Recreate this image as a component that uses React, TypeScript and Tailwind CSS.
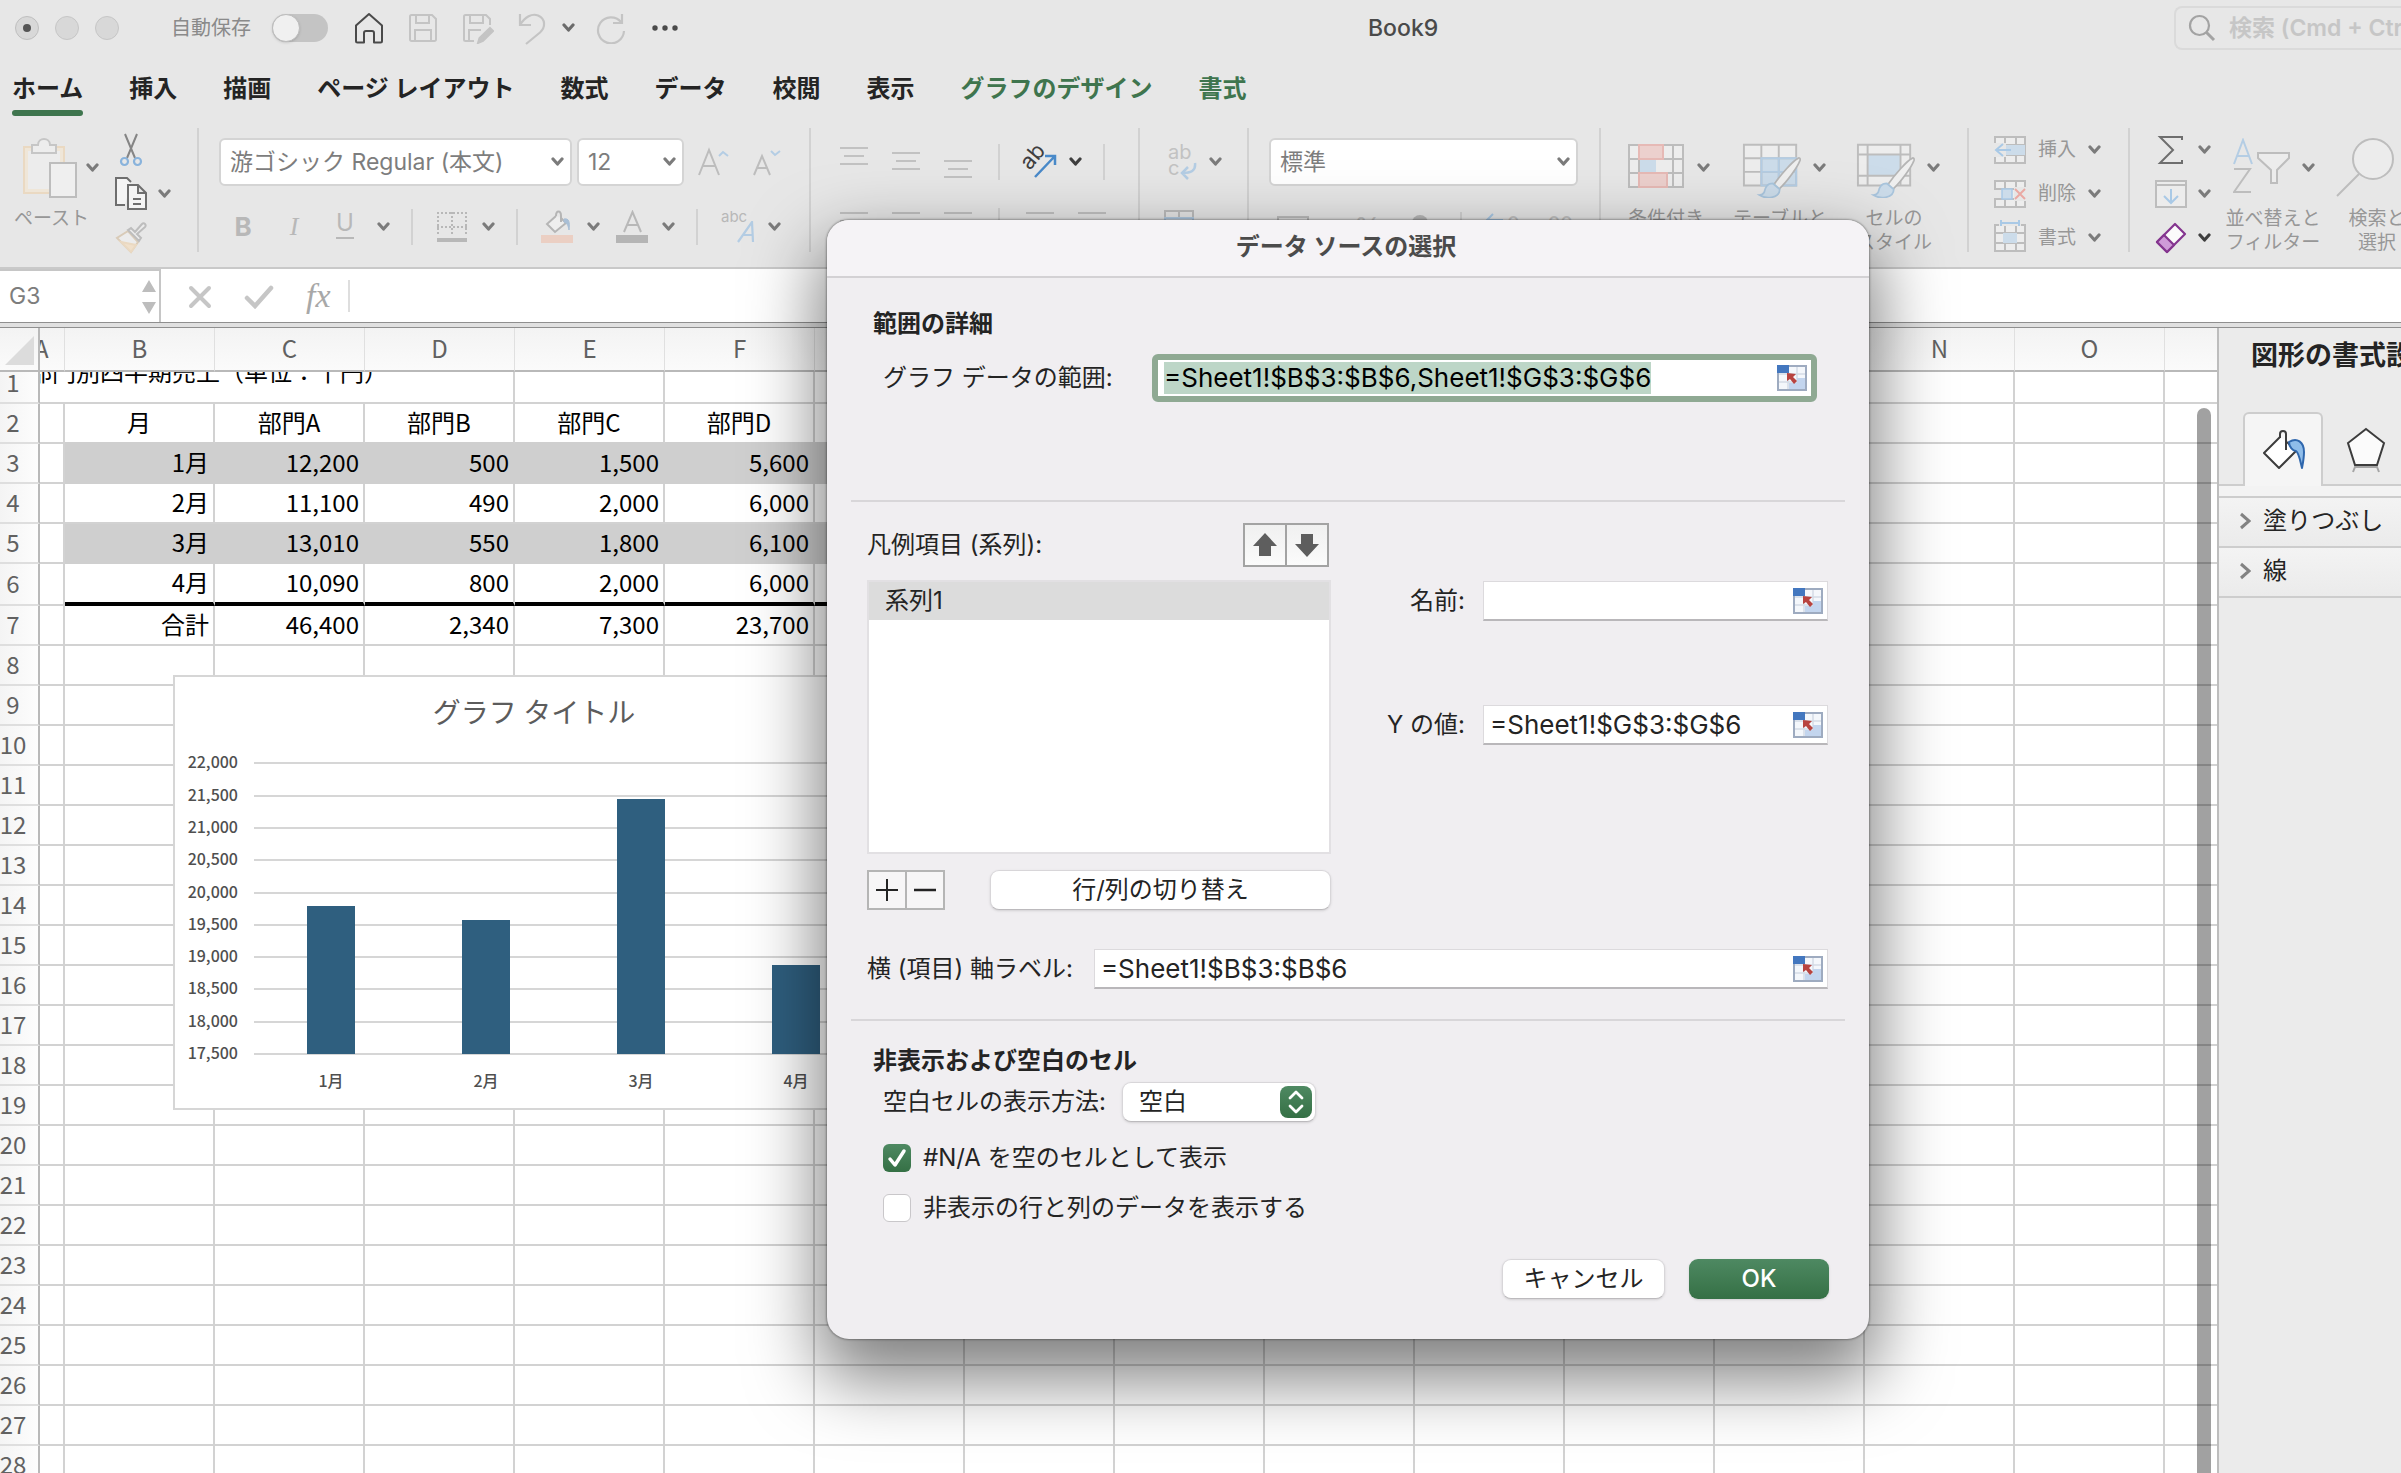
import { useEffect, useRef } from "react";
import type { ReactNode } from "react";
import clsx from "clsx";

const SANS = "font-['Inter','Noto_Sans_CJK_JP',sans-serif]";
const SHEET = "font-['Noto_Sans_CJK_JP',sans-serif]";

const tabs = [
  { label: "ホーム", active: true },
  { label: "挿入" },
  { label: "描画" },
  { label: "ページ レイアウト" },
  { label: "数式" },
  { label: "データ" },
  { label: "校閲" },
  { label: "表示" },
  { label: "グラフのデザイン", contextual: true },
  { label: "書式", contextual: true },
];

const columns = ["B", "C", "D", "E", "F", "G", "H", "I", "J", "K", "L", "M", "N", "O", "P"];

const sheetRows: Record<number, string[]> = {
  2: ["月", "部門A", "部門B", "部門C", "部門D", ""],
  3: ["1月", "12,200", "500", "1,500", "5,600", ""],
  4: ["2月", "11,100", "490", "2,000", "6,000", ""],
  5: ["3月", "13,010", "550", "1,800", "6,100", ""],
  6: ["4月", "10,090", "800", "2,000", "6,000", ""],
  7: ["合計", "46,400", "2,340", "7,300", "23,700", ""],
};

const chartData = [
  { label: "1月", value: 19800 },
  { label: "2月", value: 19590 },
  { label: "3月", value: 21460 },
  { label: "4月", value: 18890 },
];

function Chevron({ className = "text-[#7b7b7b]" }: { className?: string }) {
  return (
    <svg width="13" height="10" viewBox="0 0 13 10" className={clsx("shrink-0", className)}>
      <path d="M2 2l4.500 5L11 2" fill="none" stroke="currentColor" strokeWidth="3.200" strokeLinecap="round" strokeLinejoin="round" />
    </svg>
  );
}

function IconButton({ label, className, children }: { label: string; className?: string; children: ReactNode }) {
  return (
    <button type="button" aria-label={label} className={clsx("flex shrink-0 items-center justify-center", className)}>
      {children}
    </button>
  );
}

function GroupLine() {
  return <div className="h-[124px] w-[2px] shrink-0 bg-[#d2d2d2]" />;
}

function SmallLine() {
  return <div className="mr-[23px] ml-[21px] h-9 w-[2px] shrink-0 bg-[#d2d2d2]" />;
}

function TitleBar() {
  return (
    <header className="grid h-14 shrink-0 grid-cols-[1368px_1fr_auto] items-center">
      <div className="flex items-center pl-[15px]">
        <div className="flex gap-4">
          <span className="flex size-6 items-center justify-center rounded-full border border-[#bfbfbf] bg-[#d8d8d8]">
            <span className="size-2 rounded-full bg-[#555]" />
          </span>
          <span className="size-6 rounded-full border border-[#c6c6c6] bg-[#d8d8d8]" />
          <span className="size-6 rounded-full border border-[#c6c6c6] bg-[#d8d8d8]" />
        </div>
        <label htmlFor="autosave" className="ml-[52px] text-[20px] leading-7 text-[#8a8a8a]">自動保存</label>
        <span className="relative ml-[21px] flex h-7 w-14 items-center rounded-full bg-[#c4c4c4]">
          <input id="autosave" type="checkbox" role="switch" className="absolute inset-0 appearance-none" />
          <span className="size-7 rounded-full border border-[#bcbcbc] bg-[#f0f0f0] shadow-sm" />
        </span>
        <IconButton label="ホーム画面" className="ml-[25px]">
          <svg width="32" height="34" viewBox="0 0 32 34" fill="none" stroke="#4a4a4a" strokeWidth="2" strokeLinejoin="round">
            <path d="M3 14.5L16 3l13 11.5V30a1.5 1.5 0 0 1-1.5 1.5H21V22a2 2 0 0 0-2-2h-6a2 2 0 0 0-2 2v9.500H4.500A1.500 1.500 0 0 1 3 30z" />
          </svg>
        </IconButton>
        <IconButton label="保存" className="ml-[23px]">
          <svg width="30" height="30" viewBox="0 0 30 30" fill="none" stroke="#c4c4c4" strokeWidth="2">
            <path d="M2 3.500A1.500 1.500 0 0 1 3.500 2H24l4 4v20.500a1.500 1.500 0 0 1-1.500 1.500h-23A1.500 1.500 0 0 1 2 26.500zM8 2v8h13V2M7 28V17h16v11" />
          </svg>
        </IconButton>
        <IconButton label="名前を付けて保存" className="ml-[24px]">
          <svg width="32" height="32" viewBox="0 0 32 32" fill="none" stroke="#c4c4c4" strokeWidth="2">
            <path d="M12 29H3.500A1.500 1.500 0 0 1 2 27.500v-23A1.500 1.500 0 0 1 3.500 3H24l4 4v6M8 3v8h13V3M7 29V18h12" />
            <path d="M28 16l3 3-10 10-5 2 1.500-5z" fill="#c4c4c4" />
          </svg>
        </IconButton>
        <IconButton label="元に戻す" className="ml-[23px]">
          <svg width="30" height="34" viewBox="0 0 30 34" fill="none" stroke="#c4c4c4" strokeWidth="2.200">
            <path d="M3 3v11h11M3 14C8 6 15 2 21 4.500c8 3.500 7.500 12 2 17L9 33" />
          </svg>
        </IconButton>
        <span className="ml-[15px] flex"><Chevron className="text-[#6b6b6b]" /></span>
        <IconButton label="やり直し" className="ml-[21px]">
          <svg width="30" height="32" viewBox="0 0 30 32" fill="none" stroke="#c4c4c4" strokeWidth="2.200">
            <path d="M26 2v9h-9M25 10a13 13 0 1 0 3 9" />
          </svg>
        </IconButton>
        <IconButton label="その他" className="ml-[25px]">
          <svg width="28" height="6" viewBox="0 0 28 6" fill="#4a4a4a">
            <circle cx="4" cy="3" r="2.700" /><circle cx="14" cy="3" r="2.700" /><circle cx="24" cy="3" r="2.700" />
          </svg>
        </IconButton>
      </div>
      <h1 className="text-[23px] font-medium text-[#4a4a4a]">Book9</h1>
      <div className="flex h-11 w-[227px] items-center overflow-hidden rounded-l-lg border-2 border-r-0 border-[#dadada] pl-3">
        <svg width="28" height="28" viewBox="0 0 28 28" fill="none" stroke="#a3a3a3" strokeWidth="2.200" className="shrink-0">
          <circle cx="11.500" cy="11.500" r="9.500" /><path d="M18.500 18.500L26 26" strokeWidth="3" />
        </svg>
        <input type="search" aria-label="検索" placeholder="検索 (Cmd + Ctrl + U)" className="ml-[13px] w-[320px] shrink-0 bg-transparent text-[23px] font-semibold placeholder:text-[#c6c6c6]" />
      </div>
    </header>
  );
}

function RibbonTabs() {
  return (
    <nav className="flex h-[60px] shrink-0 gap-[46px] pt-[15px] pl-3">
      {tabs.map((tab) => (
        <button
          key={tab.label}
          type="button"
          className={clsx(
            "flex h-[45px] flex-col gap-[3px] text-[24px] leading-9 font-bold whitespace-nowrap",
            tab.contextual ? "text-[#3f754e]" : "text-[#242424]",
          )}
        >
          {tab.label}
          {tab.active && <span className="h-[6px] w-full rounded-full bg-[#3f754e]" />}
        </button>
      ))}
    </nav>
  );
}

function RibbonSelect({ label, value, className }: { label: string; value: string; className: string }) {
  return (
    <div className={clsx("relative flex h-12 shrink-0 items-center", className)}>
      <select aria-label={label} defaultValue={value} className="h-full w-full appearance-none rounded-md border-2 border-[#d4d4d4] bg-white pl-[9px] text-[23px] text-[#7d7d7d]">
        <option>{value}</option>
      </select>
      <span className="pointer-events-none absolute right-2 flex"><Chevron /></span>
    </div>
  );
}

function AlignLines({ label, y, tall }: { label: string; y: number; tall?: boolean }) {
  return (
    <IconButton label={label}>
      <svg width="28" height="34" viewBox="0 0 28 34" stroke="#c2c2c2" strokeWidth="2">
        <path d={tall ? "M0 1h28M0 9h20M0 17h28M0 25h20" : `M0 ${y}h28M4 ${y + 8}h20M0 ${y + 16}h28`} />
      </svg>
    </IconButton>
  );
}

function BigButton({ lines, icon, pad }: { lines: string[]; icon: ReactNode; pad: string }) {
  return (
    <button type="button" className="flex w-[104px] shrink-0 flex-col pt-[10px]">
      <span className={clsx("flex h-[60px] items-center gap-[11px]", pad)}>
        {icon}
        <Chevron />
      </span>
      <span className="mt-[9px] w-full text-center text-[19px] leading-6 whitespace-nowrap text-[#979797]">
        {lines.map((line) => (
          <span key={line} className="block">{line}</span>
        ))}
      </span>
    </button>
  );
}

function Brush() {
  return (
    <>
      <path d="M57 24c-5 2-18 17-25 27l5 5c9-8 20-24 22-30 .5-2-1-3-2-2z" fill="#efefef" stroke="#b5b5b5" strokeWidth="1.800" />
      <path d="M31 50c-7 0-8 5-9 9-1 2-3 3-5 3 6 4 21 4 21-6z" fill="#ccdcea" stroke="#a9c5dd" strokeWidth="1.800" />
    </>
  );
}

function CellIcon({ kind }: { kind: "insert" | "delete" | "format" }) {
  return (
    <svg width="32" height="32" viewBox="0 0 32 32" fill="none" className="shrink-0 overflow-visible">
      <path d="M1 3h30v26H1zM1 11h30M1 21h30M11 3v26M22 3v26" fill="#ededed" stroke="#bdbdbd" strokeWidth="2" />
      {kind === "insert" && (
        <>
          <path d="M12 11h19v10H12z" fill="#ccdcea" />
          <path d="M0 9h12v14H0z" fill="#e7e7e7" />
          <path d="M17 16H2M9 10l-7 6 7 6" stroke="#a9c9e6" strokeWidth="2" />
        </>
      )}
      {kind === "delete" && (
        <>
          <path d="M0 12h7v8H0zM20 9h12v14H20z" fill="#e7e7e7" />
          <path d="M8 11h10v10H8z" fill="#ccdcea" stroke="#a9c9e6" strokeWidth="1.500" />
          <path d="M21 11l10 10M31 11L21 21" stroke="#eaa9a3" strokeWidth="2" />
        </>
      )}
      {kind === "format" && (
        <>
          <path d="M9 11h14v10H9z" fill="#ccdcea" />
          <path d="M5 0h22v4H5z" fill="#e7e7e7" />
          <path d="M7 1h18M7-2v6M25-2v6" stroke="#a9c9e6" strokeWidth="2" />
        </>
      )}
    </svg>
  );
}

function Ribbon() {
  return (
    <section className="flex h-[153px] shrink-0 overflow-hidden border-b-2 border-[#c9c9c9] pt-3">
      <div className="flex shrink-0 pr-[26px] pl-[18px]">
        <button type="button" className="flex w-[84px] flex-col pt-[10px] text-left">
          <span className="flex h-[60px] items-center gap-2 pl-1">
            <svg width="56" height="60" viewBox="0 0 56 60" fill="none">
              <path d="M2 9h40v46H2z" fill="#efe6d8" stroke="#ead9c2" strokeWidth="2" />
              <path d="M6 13h32v38H6z" fill="#ececec" />
              <path d="M10 15V7h6c0-8 12-8 12 0h6v8z" fill="#ededed" stroke="#c6c6c6" strokeWidth="2" />
              <path d="M28 25h26v34H28z" fill="#efefef" stroke="#bdbdbd" strokeWidth="2" />
            </svg>
            <Chevron />
          </span>
          <span className="mt-[9px] -ml-1 text-[19px] leading-6 text-[#979797]">ペースト</span>
        </button>
        <div className="ml-[13px] flex flex-col">
          <IconButton label="切り取り" className="h-11 w-8">
            <svg width="24" height="34" viewBox="0 0 24 34" fill="none">
              <path d="M6 1l10 24M18 1L8 25" stroke="#858585" strokeWidth="2" />
              <circle cx="5.500" cy="28.500" r="3.500" stroke="#89b3dc" strokeWidth="2.200" />
              <circle cx="18.500" cy="28.500" r="3.500" stroke="#89b3dc" strokeWidth="2.200" />
            </svg>
          </IconButton>
          <button type="button" aria-label="コピー" className="flex h-11 items-center gap-[11px]">
            <svg width="32" height="34" viewBox="0 0 32 34" fill="#f4f4f4" stroke="#6e6e6e" strokeWidth="2">
              <path d="M10 28H1V1h11l4 4" />
              <path d="M13 8h10l8 8v16H13zM23 8v8h8M18 22h8M18 27h8" />
            </svg>
            <Chevron />
          </button>
          <IconButton label="書式のコピー" className="h-11 w-8">
            <svg width="32" height="32" viewBox="0 0 32 32" fill="none">
              <path d="M13 9L2 16l14 14 7-10z" fill="#ececec" stroke="#d9cbb8" strokeWidth="2" />
              <path d="M6 20l15 3-5 7z" fill="#f0e0cb" stroke="#ead9c2" strokeWidth="2" />
              <path d="M13 8l3-2 4 4 7-8c2-2 5 1 3 3l-8 7 4 4-2 3z" fill="#ececec" stroke="#bdbdbd" strokeWidth="2" />
            </svg>
          </IconButton>
        </div>
      </div>
      <GroupLine />
      <div className="flex shrink-0 flex-col pt-[10px] pr-7 pl-5">
        <div className="flex items-center">
          <RibbonSelect label="フォント" value="游ゴシック Regular (本文)" className="w-[353px]" />
          <RibbonSelect label="フォント サイズ" value="12" className="ml-[5px] w-[107px]" />
          <IconButton label="フォント サイズの拡大" className="ml-[14px]">
            <svg width="32" height="30" viewBox="0 0 32 30" fill="none" strokeWidth="2">
              <path d="M1 28L11 3l10 25M5 19h12" stroke="#bdbdbd" /><path d="M21 9l4-4 5 4" stroke="#b4cde4" />
            </svg>
          </IconButton>
          <IconButton label="フォント サイズの縮小" className="ml-[23px]">
            <svg width="28" height="30" viewBox="0 0 28 30" fill="none" strokeWidth="2">
              <path d="M1 28L9 9l8 19M4 21h10" stroke="#bdbdbd" /><path d="M18 4l4 4 5-4" stroke="#b4cde4" />
            </svg>
          </IconButton>
        </div>
        <div className="mt-5 flex h-[42px] items-center pl-[11px] text-[#b8b8b8]">
          <div className="flex gap-[25px] text-[26px] leading-9">
            <button type="button" className="w-[26px] font-bold">B</button>
            <button type="button" className="w-[26px] font-['Liberation_Serif',serif] italic">I</button>
            <button type="button" className="flex w-[26px] flex-col items-center text-[24px] leading-7">
              U<span className="h-[2px] w-[18px] bg-[#b8b8b8]" />
            </button>
          </div>
          <span className="ml-[19px] flex"><Chevron /></span>
          <SmallLine />
          <button type="button" aria-label="罫線" className="flex items-center gap-[14px]">
            <svg width="32" height="32" viewBox="0 0 32 32" fill="none" stroke="#b8b8b8" strokeWidth="2">
              <path d="M1 2h30M1 16h30M2 1v24M16 1v24M30 1v24" strokeDasharray="2 2" />
              <path d="M1 29h30" strokeWidth="4" />
            </svg>
            <Chevron />
          </button>
          <SmallLine />
          <button type="button" aria-label="塗りつぶしの色" className="flex items-center gap-[14px]">
            <svg width="32" height="34" viewBox="0 0 32 34" fill="none">
              <path d="M15 6L6 14l8 8 11-9-5-5" fill="#eee" stroke="#b5b5b5" strokeWidth="2" />
              <path d="M15 6c0-6 5-6 5 0v6" stroke="#b5b5b5" strokeWidth="2" />
              <path d="M23 9c5-1 6 3 5 11-1-5-2-7-5-8z" fill="#a9bfd6" stroke="#a9bfd6" />
              <path d="M0 25h32v8H0z" fill="#ebcfc3" />
            </svg>
            <Chevron />
          </button>
          <button type="button" aria-label="フォントの色" className="ml-4 flex items-center gap-[14px]">
            <svg width="32" height="34" viewBox="0 0 32 34" fill="none">
              <path d="M8 22L16.500 2 25 22M11 15h11" stroke="#b8b8b8" strokeWidth="2" />
              <path d="M0 25h32v8H0z" fill="#b5b5b5" />
            </svg>
            <Chevron />
          </button>
          <SmallLine />
          <button type="button" aria-label="ふりがな" className="flex items-center gap-[13px]">
            <span className="flex h-9 w-[34px] flex-col items-start">
              <span className="text-[15px] leading-4">abc</span>
              <svg width="18" height="22" viewBox="0 0 18 22" fill="none" stroke="#b4cde4" strokeWidth="2.200" className="-mt-1 self-end">
                <path d="M1 21L15 1l1 20M6 14h10" />
              </svg>
            </span>
            <Chevron />
          </button>
        </div>
      </div>
      <GroupLine />
      <div className="flex shrink-0 flex-col pt-[10px] pr-8 pl-[29px]">
        <div className="flex h-12 items-center">
          <div className="flex gap-6">
            <AlignLines label="上揃え" y={3} />
            <AlignLines label="上下中央揃え" y={8} />
            <AlignLines label="下揃え" y={16} />
          </div>
          <div className="mr-[23px] ml-[26px] h-9 w-[2px] bg-[#d2d2d2]" />
          <button type="button" aria-label="文字の方向" className="flex items-center gap-3">
            <span className="relative block h-8 w-[34px]">
              <span className="absolute -top-1 -left-1 -rotate-50 text-[22px] leading-7 text-[#3f3f3f]">ab</span>
              <svg width="34" height="32" viewBox="0 0 34 32" fill="none" stroke="#4a8ac9" strokeWidth="2.500" className="absolute">
                <path d="M12 31L32 10M22 10h10v9" />
              </svg>
            </span>
            <Chevron className="text-[#3f3f3f]" />
          </button>
          <div className="ml-[21px] h-9 w-[2px] bg-[#d2d2d2]" />
        </div>
        <div className="mt-[26px] flex h-[42px] items-start">
          <div className="flex gap-6">
            <AlignLines label="左揃え" y={1} tall />
            <AlignLines label="中央揃え" y={1} />
            <AlignLines label="右揃え" y={1} tall />
          </div>
          <div className="mx-[26px] -mt-1 h-9 w-[2px] bg-[#d2d2d2]" />
          <div className="flex gap-6">
            <AlignLines label="インデントを減らす" y={1} />
            <AlignLines label="インデントを増やす" y={1} />
          </div>
        </div>
      </div>
      <GroupLine />
      <div className="flex shrink-0 flex-col pt-[10px] pr-[25px] pl-6">
        <button type="button" aria-label="折り返して全体を表示する" className="flex h-12 items-center gap-3 pl-1">
          <span className="relative flex h-9 w-[29px] flex-col items-start text-[20px] leading-4 text-[#c2c2c2]">
            <span>ab</span>
            <span>c</span>
            <svg width="18" height="18" viewBox="0 0 18 18" fill="none" stroke="#b4cde4" strokeWidth="2.500" className="absolute right-0 bottom-0">
              <path d="M16 1c1 8-4 10-13 10M9 5l-6 6 6 6" />
            </svg>
          </span>
          <Chevron />
        </button>
        <IconButton label="セルを結合して中央揃え" className="mt-6 self-start">
          <svg width="30" height="28" viewBox="0 0 30 28" fill="none" stroke="#bdbdbd" strokeWidth="2">
            <path d="M1 1h28v26H1zM15 1v7" /><path d="M1 8h28v12H1z" fill="#dde7f0" stroke="#b4cde4" />
          </svg>
        </IconButton>
      </div>
      <GroupLine />
      <div className="flex shrink-0 flex-col pt-[10px] pr-[21px] pl-5">
        <RibbonSelect label="表示形式" value="標準" className="w-[309px]" />
        <div className="mt-[26px] flex items-start pl-2 text-[28px] leading-8 text-[#c2c2c2]">
          <svg width="32" height="24" viewBox="0 0 32 24" fill="none" stroke="#bdbdbd" strokeWidth="2"><path d="M1 5h30v18H1z" /></svg>
          <span className="ml-[45px] w-[26px]">%</span>
          <span className="mt-[3px] ml-8 size-4 rounded-full bg-[#b8b8b8]" />
          <div className="ml-8 h-9 w-[2px] bg-[#d2d2d2]" />
          <svg width="18" height="18" viewBox="0 0 18 18" fill="none" stroke="#a9c9e6" strokeWidth="2" className="ml-[23px]"><path d="M18 8H2M8 2L2 8l6 6" /></svg>
          <span className="ml-1 text-[20px] leading-6">0</span>
          <span className="ml-7 text-[20px] leading-6">00</span>
        </div>
      </div>
      <GroupLine />
      <div className="flex shrink-0 gap-[10px] pr-[21px] pl-[13px]">
        <BigButton
          lines={["条件付き", "書式"]}
          pad="pl-[14px]"
          icon={
            <svg width="58" height="60" viewBox="0 0 58 60" fill="none">
              <path d="M1 7h54v42H1z" fill="#ededed" />
              <path d="M11 7h24v14H11zM11 35h28v14H11z" fill="#ecd0cd" />
              <path d="M11 21h17v14H11z" fill="#ccdcea" />
              <path d="M1 7h54v42H1zM1 21h54M1 35h54M11 7v42M45 7v42" stroke="#bdbdbd" strokeWidth="2" />
              <path d="M11 7h24v14H11zM11 35h28v14H11z" stroke="#e6b9b5" strokeWidth="2" />
            </svg>
          }
        />
        <BigButton
          lines={["テーブルと", "して書式設定"]}
          pad="pl-[14px]"
          icon={
            <svg width="60" height="60" viewBox="0 0 60 62" fill="none">
              <path d="M1 7h54v42H1z" fill="#ededed" />
              <path d="M19 21h36v28H19z" fill="#ccdcea" />
              <path d="M1 7h54v42H1zM1 21h54M1 35h54M19 7v42M37 7v42" stroke="#bdbdbd" strokeWidth="2" />
              <path d="M19 21h36v28H19zM19 35h36M37 21v28" stroke="#b4cde4" strokeWidth="2" />
              <g transform="translate(0 -3)"><Brush /></g>
            </svg>
          }
        />
        <BigButton
          lines={["セルの", "スタイル"]}
          pad="pl-[14px]"
          icon={
            <svg width="60" height="60" viewBox="0 0 60 62" fill="none">
              <path d="M1 7h54v42H1z" fill="#ededed" />
              <path d="M11 17h34v22H11z" fill="#ccdcea" />
              <path d="M1 7h54v42H1zM1 17h54M1 39h54M11 7v42M45 7v42" stroke="#bdbdbd" strokeWidth="2" />
              <g transform="translate(0 -3)"><Brush /></g>
            </svg>
          }
        />
      </div>
      <GroupLine />
      <div className="flex shrink-0 flex-col pr-[27px] pl-[25px] text-[19px] text-[#979797]">
        <button type="button" className="flex h-11 items-center gap-3"><CellIcon kind="insert" />挿入<Chevron /></button>
        <button type="button" className="flex h-11 items-center gap-3"><CellIcon kind="delete" />削除<Chevron /></button>
        <button type="button" className="flex h-11 items-center gap-3"><CellIcon kind="format" />書式<Chevron /></button>
      </div>
      <GroupLine />
      <div className="flex shrink-0 pl-[25px]">
        <div className="flex flex-col">
          <button type="button" aria-label="オート SUM" className="flex h-11 items-center gap-[11px]">
            <svg width="32" height="32" viewBox="0 0 32 32" fill="none" stroke="#6e6e6e" strokeWidth="2">
              <path d="M27 6V3H5l13 13L5 29h22v-3" />
            </svg>
            <Chevron />
          </button>
          <button type="button" aria-label="フィル" className="flex h-11 items-center gap-[11px]">
            <svg width="32" height="32" viewBox="0 0 32 32" fill="none" stroke="#bdbdbd" strokeWidth="2">
              <path d="M1 3h30v26H1zM1 7h30" fill="#ececec" /><path d="M16 11v13M9 18l7 7 7-7" stroke="#a9c9e6" />
            </svg>
            <Chevron />
          </button>
          <button type="button" aria-label="クリア" className="flex h-11 items-center gap-[11px]">
            <svg width="32" height="32" viewBox="0 0 32 32" fill="#fbfbfb" stroke="#84358f" strokeWidth="2.200" strokeLinejoin="round">
              <path d="M20 2l10 10-18 18L2 20z" /><path d="M9 13l10 10-7 7L2 20z" fill="#cf9bd8" />
            </svg>
            <Chevron className="text-[#3f3f3f]" />
          </button>
        </div>
        <div className="ml-[10px] flex">
          <BigButton
            lines={["並べ替えと", "フィルター"]}
            pad="pl-3"
            icon={
              <svg width="58" height="60" viewBox="0 0 58 60" fill="none" strokeWidth="2">
                <path d="M1 26L10 2l9 24M4 18h12" stroke="#b4cde4" />
                <path d="M1 31h16L1 54h17" stroke="#bdbdbd" />
                <path d="M25 15h31v5L44 32v13h-6V32L25 20z" fill="#ececec" stroke="#bdbdbd" />
              </svg>
            }
          />
          <BigButton
            lines={["検索と", "選択"]}
            pad="pl-[11px]"
            icon={
              <svg width="58" height="60" viewBox="0 0 58 60" fill="none" stroke="#bdbdbd" strokeWidth="2">
                <circle cx="37" cy="21" r="20" fill="#ececec" /><path d="M23 36L1 58" />
              </svg>
            }
          />
        </div>
      </div>
    </section>
  );
}

function FormulaBar() {
  return (
    <div className="flex h-[59px] shrink-0 items-stretch border-b border-[#8f8f8f] bg-[#e0e0e0] pb-[4px]">
      <div className="flex w-full items-center border-b border-[#8f8f8f] bg-white">
        <div className="flex h-full w-[161px] items-center border-t-2 border-r-2 border-[#c6c6c6] pl-[9px]">
          <input aria-label="名前ボックス" defaultValue="G3" className="w-[133px] text-[23px] text-[#7d7d7d]" />
          <svg width="14" height="36" viewBox="0 0 14 36" fill="#bdbdbd" className="shrink-0"><path d="M7 1l7 12H0zM7 35l7-12H0z" /></svg>
        </div>
        <IconButton label="キャンセル" className="ml-[27px] pt-[2px]">
          <svg width="24" height="24" viewBox="0 0 24 24" stroke="#c6c6c6" strokeWidth="4" strokeLinecap="round"><path d="M3 3l18 18M21 3L3 21" /></svg>
        </IconButton>
        <IconButton label="入力" className="ml-8 pt-[2px]">
          <svg width="30" height="24" viewBox="0 0 30 24" fill="none" stroke="#c6c6c6" strokeWidth="4.500" strokeLinecap="round"><path d="M3 13l8 8L27 3" /></svg>
        </IconButton>
        <button type="button" aria-label="関数の挿入" className="ml-8 font-['Liberation_Serif',serif] text-[34px] leading-9 text-[#a8a8a8] italic">fx</button>
        <div className="ml-[17px] h-8 w-[2px] bg-[#dedede]" />
        <input aria-label="数式バー" className="h-full min-w-0 flex-1" />
      </div>
    </div>
  );
}

function Chart() {
  const y = (value: number) => 378 - ((value - 17500) / 500) * 32.3;
  const ticks = Array.from({ length: 10 }, (_, i) => 17500 + i * 500);

  return (
    <figure className="absolute top-[347px] left-[173px] h-[435px] w-[722px] border-2 border-[#d6d6d6] bg-white">
      <figcaption className="absolute top-4 w-full text-center text-[28px] leading-9 text-[#5c5c5c]">グラフ タイトル</figcaption>
      <svg width="718" height="431" className="text-[16px] font-medium" fill="#4f4f4f">
        {ticks.map((tick) => (
          <g key={tick}>
            <path d={`M79 ${Math.round(y(tick)) - 1}H697`} stroke="#d6d6d6" strokeWidth="2" />
            <text x="63" y={y(tick) + 4} textAnchor="end">{tick.toLocaleString("en-US")}</text>
          </g>
        ))}
        {chartData.map((item, i) => (
          <g key={item.label}>
            <rect x={132 + i * 155} y={Math.round(y(item.value))} width="48" height={377 - Math.round(y(item.value))} fill="#2f5f7f" />
            <text x={156 + i * 155} y="410" textAnchor="middle">{item.label}</text>
          </g>
        ))}
      </svg>
    </figure>
  );
}

function Sheet() {
  const cell = "border-r-2 border-b-2 border-[#d2d2d2] p-0";

  return (
    <div className={clsx("relative min-w-0 flex-1 overflow-hidden border-r-2 border-[#bdbdbd] bg-white", SHEET)}>
      <table className="w-[2314px] table-fixed border-separate border-spacing-0 text-[24px] leading-8">
        <colgroup>
          <col className="w-10" />
          <col className="w-[25px]" />
          {columns.map((name) => (
            <col key={name} className="w-[150px]" />
          ))}
        </colgroup>
        <thead className="bg-gradient-to-b from-[#f3f3f3] to-[#fbfbfb] text-[#616161]">
          <tr className="h-11">
            <th aria-label="すべて選択" className="border-r-2 border-b-2 border-[#b9b9b9] p-0">
              <svg width="38" height="42" viewBox="0 0 38 42" fill="#dcdcdc"><path d="M34 8v29H5z" /></svg>
            </th>
            <th className="overflow-hidden border-r border-b-2 border-r-[#e0e0e0] border-b-[#b9b9b9] p-0 pb-[3px] text-left font-normal">
              <span className="-ml-[6px] block">A</span>
            </th>
            {columns.map((name) => (
              <th key={name} className="border-r border-b-2 border-r-[#e0e0e0] border-b-[#b9b9b9] p-0 pb-[3px] font-normal">{name}</th>
            ))}
          </tr>
        </thead>
        <tbody>
          {Array.from({ length: 28 }, (_, i) => i + 1).map((row) => {
            const values = sheetRows[row] ?? [];
            const shaded = row === 3 || row === 5;
            return (
              <tr key={row} className={row === 1 ? "h-8" : row === 6 ? "h-[42px]" : "h-10"}>
                <th className="border-r-2 border-b-2 border-r-[#b9b9b9] border-b-[#dedede] bg-gradient-to-r from-[#f4f4f4] to-[#fdfdfd] p-0 pr-3 font-normal text-[#616161]">
                  <span className={clsx("-mx-2 block", row === 1 ? "h-[30px] leading-5" : "pb-[3px]")}>{row}</span>
                </th>
                {row === 1 ? (
                  <td colSpan={4} className={cell}>
                    <div className="h-[30px] overflow-hidden">
                      <span className="-mt-[19px] -ml-3 block leading-9 whitespace-nowrap">部門別四半期売上（単位：千円）</span>
                    </div>
                  </td>
                ) : (
                  <td className={cell} />
                )}
                {columns.slice(row === 1 ? 3 : 0).map((name, index) => {
                  const filled = index < values.length;
                  return (
                    <td
                      key={name}
                      className={clsx(
                        "p-0 pb-[3px]",
                        filled && shaded ? "border-r-2 border-b-2 border-[#cfcfcf] bg-[#cfcfcf]" : "border-r-2 border-[#d2d2d2]",
                        filled && row === 6 ? "border-b-4 border-b-black" : "border-b-2",
                        row === 2 && index < 6 ? "border-b-[#cfcfcf] text-center" : "pr-1 text-right",
                      )}
                    >
                      {values[index]}
                    </td>
                  );
                })}
              </tr>
            );
          })}
        </tbody>
      </table>
      <Chart />
      <div className="absolute top-20 right-[6px] bottom-0 w-[14px] rounded-t-full bg-black/37" />
    </div>
  );
}

function FormatPane() {
  return (
    <aside className="flex w-[182px] shrink-0 flex-col overflow-hidden bg-[#ebebeb] text-[#242424]">
      <h2 className="pt-2 pl-8 text-[27px] leading-10 font-bold whitespace-nowrap">図形の書式設定</h2>
      <div className="mt-9 flex h-[74px] shrink-0">
        <div className="w-6 shrink-0 border-b-2 border-[#cdcdcd]" />
        <IconButton label="塗りつぶしと線" className="w-20 rounded-t-md border-2 border-b-0 border-[#cdcdcd] bg-[#f5f5f5]">
          <svg width="44" height="42" viewBox="0 0 44 42" fill="none" strokeLinejoin="round">
            <path d="M19 8L3 24l15 15 17-17-9-9" fill="#fff" stroke="#3c3c3c" strokeWidth="2" />
            <path d="M25 21V5c0-4-6-4-6 0v4" stroke="#3c3c3c" strokeWidth="2" />
            <path d="M28 13c8-5 15 0 15 10 0 6-1 11-2 16-2-8-3-15-6-17-3 0-7-4-7-9z" fill="#8fbdea" stroke="#2f67ad" strokeWidth="2" />
          </svg>
        </IconButton>
        <IconButton label="効果" className="w-[78px] border-b-2 border-[#cdcdcd] pt-1 pl-2">
          <svg width="40" height="46" viewBox="0 0 40 46" fill="#fbfbfb" stroke="#3c3c3c" strokeWidth="2">
            <path d="M20 2l18 14-7 22H9L2 16z" />
            <path d="M7 45l2-5h22l2 5" fill="none" stroke="#a5a5a5" />
          </svg>
        </IconButton>
      </div>
      <div className="h-[10px] shrink-0 bg-[#f3f3f3]" />
      {["塗りつぶし", "線"].map((label) => (
        <button key={label} type="button" className="flex h-[50px] shrink-0 items-center gap-3 border-t-2 border-[#cdcdcd] bg-gradient-to-b from-[#f3f3f3] to-[#ebebeb] pb-[2px] pl-5 text-[24px] whitespace-nowrap">
          <svg width="12" height="18" viewBox="0 0 12 18" fill="none" stroke="#828282" strokeWidth="3"><path d="M2 2l8 7-8 7" /></svg>
          {label}
        </button>
      ))}
      <div className="h-[2px] shrink-0 bg-[#cdcdcd]" />
    </aside>
  );
}

function RangeIcon() {
  return (
    <svg width="30" height="26" viewBox="0 0 30 26" fill="none">
      <path d="M1 1h28v24H1z" fill="#f4f7fb" stroke="#9eabc0" strokeWidth="2" />
      <path d="M11 2v22M20 2v22M2 9h26M2 17h26" stroke="#d3dbe6" strokeWidth="1.500" />
      <path d="M20 13h8v11h-8zM12 18h8v6h-8z" fill="#c3d5ee" />
      <path d="M0 0h12v8H0z" fill="#4377bf" />
      <path d="M10 8l9 1-3 3 4 4-3 3-4-5-3 2z" fill="#b8433f" />
    </svg>
  );
}

function RangeField({ id, value, className }: { id: string; value: string; className?: string }) {
  return (
    <div className={clsx("flex h-10 items-center border border-b-2 border-[#dcdadd] border-b-[#b9b7ba] bg-white pr-1 pl-[6px]", className)}>
      <input id={id} defaultValue={value} className="min-w-0 flex-1 text-[26px] leading-8" />
      <IconButton label="範囲の選択"><RangeIcon /></IconButton>
    </div>
  );
}

function SourceDialog() {
  const rangeRef = useRef<HTMLInputElement>(null);

  useEffect(() => {
    rangeRef.current?.focus();
    rangeRef.current?.select();
  }, []);

  const pushButton = "h-10 rounded-[9px] border border-[#d8d6d9] border-b-[#bcbabd] bg-white shadow-sm";

  return (
    <div role="dialog" aria-labelledby="dialog-title" className="absolute top-[220px] left-[827px] flex w-[1042px] flex-col rounded-[22px] bg-[#f0eef1] pb-10 text-[24px] leading-9 text-[#242424] shadow-[0_0_2px_1px_rgba(0,0,0,0.3),0_32px_70px_8px_rgba(0,0,0,0.5)]">
      <h2 id="dialog-title" className="h-[58px] rounded-t-[22px] border-b-2 border-[#d3d1d4] bg-[#f5f3f6] pt-[9px] pr-1 text-center font-bold text-[#4b4b4b]">
        データ ソースの選択
      </h2>

      <section className="mx-6 h-[224px] border-b-2 border-[#d8d6d9] pt-[28px] pl-[22px]">
        <h3 className="font-bold">範囲の詳細</h3>
        <div className="mt-3 flex items-center pl-[10px]">
          <label htmlFor="range" className="w-[269px] whitespace-nowrap">グラフ データの範囲:</label>
          <div className="flex h-12 w-[665px] items-center rounded-md border-[6px] border-[#8fa993] bg-white pr-1 pl-[6px]">
            <input ref={rangeRef} id="range" defaultValue="=Sheet1!$B$3:$B$6,Sheet1!$G$3:$G$6" className="min-w-0 flex-1 text-[26px] leading-8 text-black outline-none selection:bg-[#bdd6c7] selection:text-black" />
            <IconButton label="範囲の選択"><RangeIcon /></IconButton>
          </div>
        </div>
      </section>

      <section className="mx-6 border-b-2 border-[#d8d6d9] pt-[21px] pr-[17px] pb-[30px] pl-4">
        <div className="flex justify-between">
          <div className="w-[464px]">
            <div className="flex items-center justify-between pr-[2px]">
              <span id="series-label">凡例項目 (系列):</span>
              <div className="flex h-11 w-[86px] divide-x-2 divide-[#a3a3a3] border-2 border-[#a3a3a3] bg-gradient-to-b from-[#f0f0f0] to-[#fbfbfb]">
                <IconButton label="上へ移動" className="flex-1">
                  <svg width="24" height="24" viewBox="0 0 24 24" fill="#5e5e5e"><path d="M12 0l12 13h-6v10H6V13H0z" /></svg>
                </IconButton>
                <IconButton label="下へ移動" className="flex-1">
                  <svg width="24" height="24" viewBox="0 0 24 24" fill="#5e5e5e"><path d="M12 24l12-13h-6V1H6v10H0z" /></svg>
                </IconButton>
              </div>
            </div>
            <ul role="listbox" aria-labelledby="series-label" className="mt-[13px] h-[274px] border-2 border-[#e2e0e3] bg-white">
              <li role="option" aria-selected="true" className="h-[38px] bg-[#dcdcdc] pt-[1px] pl-4">系列1</li>
            </ul>
            <div className="mt-4 flex justify-between">
              <div className="flex h-10 w-[78px] divide-x-2 divide-[#b5b5b5] border-2 border-[#b5b5b5] bg-[#f7f6f7]">
                <IconButton label="系列の追加" className="flex-1">
                  <svg width="22" height="22" viewBox="0 0 22 22" stroke="#242424" strokeWidth="2"><path d="M11 0v22M0 11h22" /></svg>
                </IconButton>
                <IconButton label="系列の削除" className="flex-1">
                  <svg width="22" height="22" viewBox="0 0 22 22" stroke="#242424" strokeWidth="2.500"><path d="M0 11h22" /></svg>
                </IconButton>
              </div>
              <button type="button" className={clsx("w-[341px]", pushButton)}>行/列の切り替え</button>
            </div>
          </div>
          <div className="grid grid-cols-[auto_345px] content-start items-center gap-x-[18px] gap-y-[84px] pt-[58px]">
            <label htmlFor="series-name" className="text-right">名前:</label>
            <RangeField id="series-name" value="" />
            <label htmlFor="series-values" className="text-right">Y の値:</label>
            <RangeField id="series-values" value="=Sheet1!$G$3:$G$6" />
          </div>
        </div>
        <div className="mt-[39px] flex items-center gap-[21px]">
          <label htmlFor="axis-labels" className="whitespace-nowrap">横 (項目) 軸ラベル:</label>
          <RangeField id="axis-labels" value="=Sheet1!$B$3:$B$6" className="flex-1" />
        </div>
      </section>

      <section className="mx-6 pt-[22px] pl-[22px]">
        <h3 className="font-bold">非表示および空白のセル</h3>
        <div className="mt-[3px] flex items-center gap-4 pl-[10px]">
          <label htmlFor="blank-cells">空白セルの表示方法:</label>
          <div className="relative flex items-center">
            <select id="blank-cells" className={clsx("w-[194px] appearance-none pl-4 leading-9", pushButton)}>
              <option>空白</option>
            </select>
            <span className="pointer-events-none absolute right-1 flex size-8 items-center justify-center rounded-lg bg-gradient-to-b from-[#4e8962] to-[#357045]">
              <svg width="16" height="24" viewBox="0 0 16 24" fill="none" stroke="#fff" strokeWidth="2.800" strokeLinecap="round" strokeLinejoin="round">
                <path d="M2 8l6-6 6 6M2 16l6 6 6-6" />
              </svg>
            </span>
          </div>
        </div>
        <div className="mt-[18px] flex flex-col gap-[14px] pl-[10px]">
          <label className="flex items-center gap-3">
            <span className="relative flex size-7">
              <input type="checkbox" defaultChecked className="size-7 appearance-none rounded-md bg-gradient-to-b from-[#4e8962] to-[#357045]" />
              <svg width="28" height="28" viewBox="0 0 28 28" fill="none" stroke="#fff" strokeWidth="3.500" strokeLinecap="round" strokeLinejoin="round" className="pointer-events-none absolute">
                <path d="M7 15l5 6 9-14" />
              </svg>
            </span>
            #N/A を空のセルとして表示
          </label>
          <label className="flex items-center gap-3">
            <input type="checkbox" className="size-7 appearance-none rounded-md border border-[#c9c7ca] bg-white" />
            非表示の行と列のデータを表示する
          </label>
        </div>
      </section>

      <footer className="mt-[33px] flex justify-end gap-6 pr-10">
        <button type="button" className={clsx("w-[163px]", pushButton)}>キャンセル</button>
        <button type="button" className="h-10 w-[140px] rounded-[9px] bg-gradient-to-b from-[#4e8962] to-[#357045] font-medium text-white shadow-sm">OK</button>
      </footer>
    </div>
  );
}

export default function App() {
  return (
    <div className={clsx("relative flex h-screen flex-col overflow-hidden bg-[#e7e7e7]", SANS)}>
      <TitleBar />
      <RibbonTabs />
      <Ribbon />
      <FormulaBar />
      <main className="flex min-h-0 flex-1">
        <Sheet />
        <FormatPane />
      </main>
      <SourceDialog />
    </div>
  );
}
